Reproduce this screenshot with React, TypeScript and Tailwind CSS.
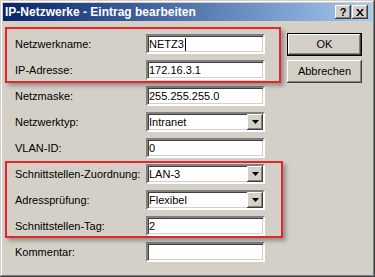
import type { ReactNode } from 'react';

const raised =
  'bg-[#d4d0c8] shadow-[inset_-1px_-1px_#404040,inset_1px_1px_#ffffff,inset_-2px_-2px_#808080,inset_2px_2px_#d4d0c8]';
const sunken =
  'bg-white border-2 border-t-[#808080] border-l-[#808080] border-b-white border-r-white shadow-[inset_1px_1px_#404040,inset_-1px_-1px_#d4d0c8]';

function Field({ label, children }: { label: string; children: ReactNode }) {
  return (
    <div className="h-[20px] mb-[6px] flex items-center">
      <span className="w-[131px] text-[11px] text-black">{label}</span>
      {children}
    </div>
  );
}

function TextBox({ value = '', caret = false }: { value?: string; caret?: boolean }) {
  return (
    <div className={`${sunken} w-[119px] h-[20px] flex items-center pl-[1px] text-[11px] text-black`}>
      <span>{value}</span>
      {caret && <span className="w-px h-[13px] bg-black ml-px" />}
    </div>
  );
}

function Select({ value }: { value: string }) {
  return (
    <div className={`${sunken} w-[119px] h-[20px] flex items-center text-[11px] text-black`}>
      <span className="flex-1 pl-[1px]">{value}</span>
      <div className={`${raised} w-[16px] h-[16px] flex items-center justify-center`}>
        <svg width="7" height="4" viewBox="0 0 7 4">
          <path d="M0 0h7L3.5 4z" fill="#000" />
        </svg>
      </div>
    </div>
  );
}

export default function App() {
  return (
    <div className="relative w-[375px] h-[277px] bg-[#d4d0c8] p-[3px] flex flex-col font-['Liberation_Sans',Arial,sans-serif] shadow-[inset_-1px_-1px_#404040,inset_1px_1px_#d4d0c8,inset_-2px_-2px_#808080,inset_2px_2px_#ffffff]">
      {/* Title bar */}
      <div className="h-[18px] bg-linear-to-r from-[#0a246a] to-[#a6caf0] flex items-center pl-[2px] pr-[4px]">
        <span className="flex-1 text-white font-bold text-[12px] leading-none">
          IP-Netzwerke - Eintrag bearbeiten
        </span>
        <div className="flex gap-[1px]">
          <div className={`${raised} w-[16px] h-[14px] flex items-center justify-center text-[11px] font-bold text-black leading-none`}>
            ?
          </div>
          <div className={`${raised} w-[16px] h-[14px] flex items-center justify-center`}>
            <svg width="8" height="7" viewBox="0 0 8 7">
              <path d="M0 0h2l2 2.5L6 0h2L5 3.5 8 7H6L4 4.5 2 7H0l3-3.5z" fill="#000" />
            </svg>
          </div>
        </div>
      </div>

      {/* Body */}
      <div className="flex flex-1 pl-[12px] pr-[10px]">
        <div className="pt-[13px]">
          <Field label="Netzwerkname:">
            <TextBox value="NETZ3" caret />
          </Field>
          <Field label="IP-Adresse:">
            <TextBox value="172.16.3.1" />
          </Field>
          <Field label="Netzmaske:">
            <TextBox value="255.255.255.0" />
          </Field>
          <Field label="Netzwerktyp:">
            <Select value="Intranet" />
          </Field>
          <Field label="VLAN-ID:">
            <TextBox value="0" />
          </Field>
          <Field label="Schnittstellen-Zuordnung:">
            <Select value="LAN-3" />
          </Field>
          <Field label="Adressprüfung:">
            <Select value="Flexibel" />
          </Field>
          <Field label="Schnittstellen-Tag:">
            <TextBox value="2" />
          </Field>
          <Field label="Kommentar:">
            <TextBox />
          </Field>
        </div>
        <div className="ml-auto pt-[12px] flex flex-col gap-[4px]">
          <button className="w-[75px] h-[23px] border border-black bg-[#d4d0c8] shadow-[inset_-1px_-1px_#404040,inset_1px_1px_#ffffff,inset_-2px_-2px_#808080] text-[11px] text-black">
            OK
          </button>
          <button className={`${raised} w-[75px] h-[23px] text-[11px] text-black`}>Abbrechen</button>
        </div>
      </div>

      {/* Red highlight annotations */}
      <div className="absolute left-[5px] top-[27px] w-[276px] h-[56px] border-2 border-[#e3262b] shadow-[3px_3px_4px_rgba(0,0,0,0.3)] pointer-events-none" />
      <div className="absolute left-[5px] top-[161px] w-[278px] h-[77px] border-2 border-[#e3262b] shadow-[3px_3px_4px_rgba(0,0,0,0.3)] pointer-events-none" />
    </div>
  );
}
